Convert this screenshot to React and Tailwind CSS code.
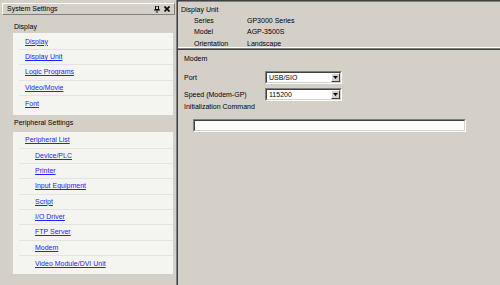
import React from 'react';

const displayLinks = ['Display', 'Display Unit', 'Logic Programs', 'Video/Movie', 'Font'];

const peripheralLinks = [
  { label: 'Peripheral List', sub: false },
  { label: 'Device/PLC', sub: true },
  { label: 'Printer', sub: true },
  { label: 'Input Equipment', sub: true },
  { label: 'Script', sub: true },
  { label: 'I/O Driver', sub: true },
  { label: 'FTP Server', sub: true },
  { label: 'Modem', sub: true },
  { label: 'Video Module/DVI Unit', sub: true },
];

function LinkRow({ label, sub, last }) {
  return (
    <div className="h-[15.35px] flex flex-col">
      <div className={`flex-1 flex items-center ${sub ? 'pl-[22px]' : 'pl-[12px]'}`}>
        <span className="text-[#2222ff] underline underline-offset-[1px]">{label}</span>
      </div>
      {!last && <div className="ml-[6px] h-px bg-[#e3e4df]"></div>}
    </div>
  );
}

function Select({ value }) {
  return (
    <div className="w-[77px] h-[13px] flex border-t border-l border-t-[#808080] border-l-[#808080] border-b border-r border-b-white border-r-white">
      <div className="flex-1 flex border-t border-l border-t-[#404040] border-l-[#404040] border-b border-r border-b-[#d4d0c8] border-r-[#d4d0c8] bg-white">
        <div className="flex-1 flex items-center pl-[2px]">{value}</div>
        <div className="w-[9px] flex items-center justify-center bg-[#d4d0c8] border-t border-l border-t-white border-l-white border-b border-r border-b-[#404040] border-r-[#404040]">
          <svg width="5" height="3" viewBox="0 0 5 3">
            <polygon points="0,0 5,0 2.5,3" fill="#000" />
          </svg>
        </div>
      </div>
    </div>
  );
}

export default function App() {
  return (
    <div className="w-[500px] h-[285px] bg-[#d4d0c8] flex overflow-hidden text-[7px] leading-[8px] text-black font-['Liberation_Sans',Arial,sans-serif]">
      <div className="w-[176px] flex flex-col">
        <div className="mt-[3px] ml-[2px] w-[173px] h-[12px] flex items-center justify-between pl-[4px] pr-[4px] border border-t-white border-l-white border-b-[#808080] border-r-[#808080]">
          <span>System Settings</span>
          <div className="flex items-center gap-[4px]">
            <svg width="6" height="7" viewBox="0 0 6 7">
              <rect x="1.5" y="0" width="3" height="3.5" fill="none" stroke="#000" strokeWidth="1" />
              <rect x="0" y="3.5" width="6" height="1" fill="#000" />
              <rect x="2.5" y="4.5" width="1" height="2.5" fill="#000" />
            </svg>
            <svg width="6" height="6" viewBox="0 0 6 6">
              <path d="M0.5 0.5 L5.5 5.5 M5.5 0.5 L0.5 5.5" stroke="#000" strokeWidth="1.6" />
            </svg>
          </div>
        </div>
        <div className="pl-[13px] pr-[3px] flex flex-col">
          <div className="h-[18px] flex items-end pb-[2px] pl-[1px]">Display</div>
          <div className="bg-[#f4f5f1] pt-[1.5px] pb-[3.5px]">
            {displayLinks.map((l, i) => (
              <LinkRow key={l} label={l} sub={false} last={i === displayLinks.length - 1} />
            ))}
          </div>
          <div className="h-[17px] flex items-center pl-[1px]">Peripheral Settings</div>
          <div className="bg-[#f4f5f1] pt-[1.5px] pb-[3px]">
            {peripheralLinks.map((l, i) => (
              <LinkRow key={l.label} label={l.label} sub={l.sub} last={i === peripheralLinks.length - 1} />
            ))}
          </div>
        </div>
      </div>

      <div className="w-px bg-[#808080]"></div>
      <div className="w-px bg-[#404040]"></div>

      <div className="flex-1 flex flex-col">
        <div className="h-px bg-[#404040]"></div>
        <div className="h-px bg-[#808080]"></div>
        <div className="h-[45px] pl-[3px] pt-[2px]">
          <div className="h-[11px] flex items-center">Display Unit</div>
          {[
            ['Series', 'GP3000 Series'],
            ['Model', 'AGP-3500S'],
            ['Orientation', 'Landscape'],
          ].map(([k, v]) => (
            <div key={k} className="h-[11.5px] flex items-center pl-[13px]">
              <span className="w-[53px]">{k}</span>
              <span>{v}</span>
            </div>
          ))}
        </div>
        <div className="h-px bg-white"></div>
        <div className="h-px bg-[#808080]"></div>
        <div className="h-px bg-[#404040]"></div>
        <div className="pl-[6px] flex flex-col">
          <div className="h-[17px] flex items-center">Modem</div>
          <div className="mt-[4px] flex items-center">
            <span className="w-[81px]">Port</span>
            <Select value="USB/SIO" />
          </div>
          <div className="mt-[4px] flex items-center">
            <span className="w-[81px]">Speed (Modem-GP)</span>
            <Select value="115200" />
          </div>
          <div className="h-[10px] mt-[1px] flex items-center">Initialization Command</div>
          <div className="mt-[7px] ml-[9px] w-[273px] h-[13px] border-t border-l border-t-[#808080] border-l-[#808080] border-b border-r border-b-white border-r-white">
            <div className="h-full border-t border-l border-t-[#404040] border-l-[#404040] border-b border-r border-b-[#d4d0c8] border-r-[#d4d0c8] bg-[#fcfdfa]"></div>
          </div>
        </div>
      </div>
    </div>
  );
}
